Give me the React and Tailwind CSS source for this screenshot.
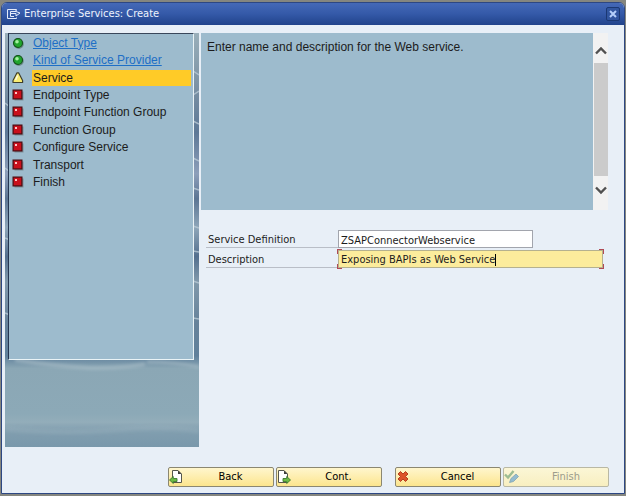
import React, { useState } from "react";

const steps = [
  { label: "Object Type", status: "done" },
  { label: "Kind of Service Provider", status: "done" },
  { label: "Service", status: "current" },
  { label: "Endpoint Type", status: "open" },
  { label: "Endpoint Function Group", status: "open" },
  { label: "Function Group", status: "open" },
  { label: "Configure Service", status: "open" },
  { label: "Transport", status: "open" },
  { label: "Finish", status: "open" },
];

const StatusIcon = ({ status }) => {
  if (status === "done") {
    return (
      <svg width="12" height="12" viewBox="0 0 12 12" aria-hidden="true">
        <circle cx="6.8" cy="7" r="5" fill="#6f8d8c" />
        <circle cx="6" cy="6" r="4.5" fill="#21a52d" stroke="#14501b" strokeWidth="1.1" />
        <circle cx="5" cy="4.8" r="1.8" fill="#a5f0a0" />
      </svg>
    );
  }
  if (status === "current") {
    return (
      <svg width="12" height="12" viewBox="0 0 12 12" aria-hidden="true">
        <path d="M5 0.8 H6.6 L10.6 8.5 V10.5 H1 V8.5 Z" fill="#f8ec72" stroke="#3f3f2c" strokeWidth="1.2" strokeLinejoin="round" />
        <path d="M5.6 3.5 L3.6 8" stroke="#fffde0" strokeWidth="1.5" />
      </svg>
    );
  }
  return (
    <svg width="12" height="12" viewBox="0 0 12 12" aria-hidden="true">
      <rect x="2.5" y="2.5" width="9" height="9" fill="#7b8f99" />
      <rect x="1.1" y="1.1" width="8.8" height="8.8" fill="#c9101c" stroke="#4c0a10" strokeWidth="1.2" />
      <rect x="3" y="3" width="2" height="2" fill="#ffc4c4" />
    </svg>
  );
};

const SidebarTexture = () => (
  <svg className="absolute inset-0 h-full w-full" viewBox="0 0 194 414" preserveAspectRatio="none" aria-hidden="true">
    <defs>
      <linearGradient id="water" x1="0" y1="0" x2="0" y2="1">
        <stop offset="0" stopColor="#9aafba" />
        <stop offset="0.12" stopColor="#7d94a6" />
        <stop offset="0.24" stopColor="#5d7896" />
        <stop offset="0.34" stopColor="#8d9fba" />
        <stop offset="0.4" stopColor="#5b7593" />
        <stop offset="0.47" stopColor="#8ea6b9" />
        <stop offset="0.54" stopColor="#536f8e" />
        <stop offset="0.6" stopColor="#8199ab" />
        <stop offset="0.7" stopColor="#66829a" />
        <stop offset="0.78" stopColor="#60809b" />
        <stop offset="0.81" stopColor="#8ba7b5" />
        <stop offset="0.92" stopColor="#8ca9b7" />
        <stop offset="0.94" stopColor="#93adba" />
        <stop offset="0.96" stopColor="#819eaf" />
        <stop offset="1" stopColor="#7998ab" />
      </linearGradient>
      <filter id="soft" x="-5%" y="-100%" width="110%" height="300%">
        <feGaussianBlur stdDeviation="1.5" />
      </filter>
    </defs>
    <rect width="194" height="414" fill="url(#water)" />
    <g fill="none" stroke="#b9cad5" strokeWidth="1.5" opacity="0.8">
      <path d="M188 38 L194 42 M188 62 L194 58 M188 88 L194 91 M188 125 L194 128 M188 155 L194 157 M188 193 L194 195 M188 218 L194 219 M188 248 L194 250 M188 285 L194 286" />
      <path d="M0 70 L5 74 M0 135 L5 139 M0 205 L5 207 M0 280 L5 282" />
    </g>
    <g fill="none" stroke="#a9bdc7" opacity="0.6" filter="url(#soft)">
      <path d="M10 327 Q50 333 85 335 Q120 335 140 331" strokeWidth="4" />
      <path d="M142 329 Q170 329 194 334" strokeWidth="3" />
      <path d="M0 396 Q60 401 110 397 T194 398" strokeWidth="5" opacity="0.4" />
    </g>
  </svg>
);

const PageArrowIcon = ({ back }) => (
  <svg width="15" height="16" viewBox="0 0 15 16" aria-hidden="true">
    <path
      d={back ? "M3.5 1.5 H9 L12.5 5 V13.5 H3.5 Z" : "M1.5 1.5 H7 L10.5 5 V13.5 H1.5 Z"}
      fill="#fff"
      stroke="#55564c"
    />
    <path d={back ? "M9 1.5 V5 H12.5 Z" : "M7 1.5 V5 H10.5 Z"} fill="#3d3d38" />
    <path
      d={
        back
          ? "M0.5 11 L4.3 7.5 V9.5 H8 V12.5 H4.3 V14.5 Z"
          : "M13.5 11 L9.7 7.5 V9.5 H6 V12.5 H9.7 V14.5 Z"
      }
      fill="#6cbb45"
      stroke="#3c7b2c"
      strokeWidth="0.9"
    />
  </svg>
);

const CancelIcon = () => (
  <svg width="15" height="16" viewBox="0 0 15 16" aria-hidden="true">
    <path
      d="M2 5 L4.5 2.5 L7 5 L9.5 2.5 L12 5 L9.5 7.5 L12 10 L9.5 12.5 L7 10 L4.5 12.5 L2 10 L4.5 7.5 Z"
      fill="#dc5228"
      stroke="#b33f1e"
      strokeLinejoin="round"
    />
  </svg>
);

const FinishIcon = () => (
  <svg width="16" height="16" viewBox="0 0 16 16" aria-hidden="true">
    <path d="M1 5.5 L4 8.5 L9.5 2" fill="none" stroke="#9dbd92" strokeWidth="2.4" />
    <path d="M5.5 13.5 L7 9.5 L12 5 L14.5 7.5 L9.5 12.5 Z" fill="#93bcd0" stroke="#82a4b2" strokeWidth="0.8" />
  </svg>
);

const WizardButton = ({ icon, label, disabled }) => (
  <button
    type="button"
    disabled={disabled}
    className="flex h-5 w-[106px] items-center rounded-xs border border-[#8b8771] bg-linear-to-b from-[#fff6cd] to-[#fce58d] text-black disabled:border-[#b9b8a4] disabled:from-[#fbf6d6] disabled:to-[#f8efc0] disabled:text-[#9c9b8b]"
  >
    {icon}
    <span className="flex-1 pl-1 text-center">{label}</span>
  </button>
);

const App = () => {
  const [name, setName] = useState("ZSAPConnectorWebservice");
  const [description, setDescription] = useState("Exposing BAPIs as Web Service");

  return (
    <div className="bg-[#85867f] px-px pt-0.5 pb-0.5 font-['DejaVu_Sans_Condensed','DejaVu_Sans',sans-serif] text-[11px] leading-4 text-[#1c1c1c]">
      <div className="overflow-hidden rounded-t-md border border-[#2d4783] bg-[#e8eff7]">
        <header className="flex h-[22px] items-center gap-0.5 bg-linear-to-b from-[#4569b7] via-[#3459a8] to-[#21438b] px-1 text-[#eef3fc]">
          <svg width="16" height="12" viewBox="0 0 16 12" fill="none" stroke="#e3eafa" aria-hidden="true">
            <path d="M10.5 2.5 V1.5 H1.5 V10.5 H10.5 V9.5" />
            <path d="M10 3.5 H4.5 V8.5 H8 M4.5 5.5 H8.5 M10 2 V3.5 L14 5 L10 8 V5.5 H8" />
          </svg>
          <h1 className="flex-1">Enterprise Services: Create</h1>
          <button
            type="button"
            aria-label="Close"
            className="flex h-3.5 w-3.5 items-center justify-center rounded-xs border border-[#1b3873] bg-[#31559f]"
          >
            <svg width="8" height="8" viewBox="0 0 8 8" stroke="#b5cffa" strokeWidth="2" aria-hidden="true">
              <path d="M1 1 L7 7 M7 1 L1 7" />
            </svg>
          </button>
        </header>

        <div className="flex gap-0.5 pt-2 pr-4 pl-[3px]">
          <aside className="relative h-[414px] w-[194px] shrink-0 pr-[5px] pl-[3px]">
            <SidebarTexture />
            <nav
              aria-label="Wizard steps"
              className="relative h-[327px] border border-t-[#39475b] border-r-[#eaf3f6] border-b-[#eaf3f6] border-l-[#263651] bg-[#9dbbcd] font-['Liberation_Sans',Arial,sans-serif] text-xs"
            >
              <ol className="grid h-[157px] auto-rows-fr pr-0.5">
                {steps.map(({ label, status }) => (
                  <li key={label} className="flex items-center gap-2 pl-[3px]">
                    <StatusIcon status={status} />
                    {status === "done" ? (
                      <a href="#" className="px-px text-[#1e6fc6] underline">
                        {label}
                      </a>
                    ) : (
                      <span className={status === "current" ? "flex-1 bg-[#ffcb27] px-px" : "px-px"}>
                        {label}
                      </span>
                    )}
                  </li>
                ))}
              </ol>
            </nav>
          </aside>

          <main className="min-w-0 flex-1">
            <section className="flex h-[177px]">
              <p className="flex-1 bg-[#9dbbcd] px-1.5 py-1.5 font-['Liberation_Sans',Arial,sans-serif] text-xs">
                Enter name and description for the Web service.
              </p>
              <div className="flex w-[15px] flex-col items-center bg-[#f2f2f2] pl-px">
                <button type="button" aria-label="Scroll up" className="flex h-[30px] w-full items-end justify-center pb-2">
                  <svg width="12" height="9" viewBox="0 0 12 9" fill="none" stroke="#505050" strokeWidth="2.4" aria-hidden="true">
                    <path d="M1 7.5 L6 2.5 L11 7.5" />
                  </svg>
                </button>
                <div className="w-full flex-1 bg-[#cbcbcb]" />
                <button type="button" aria-label="Scroll down" className="flex h-[34px] w-full items-start justify-center pt-2.5">
                  <svg width="12" height="9" viewBox="0 0 12 9" fill="none" stroke="#505050" strokeWidth="2.4" aria-hidden="true">
                    <path d="M1 1.5 L6 6.5 L11 1.5" />
                  </svg>
                </button>
              </div>
            </section>

            <form className="grid gap-0.5 pt-5 pr-[5px] pl-[5px]">
              <div className="flex">
                <label htmlFor="service" className="h-[18px] w-[132px] border-b border-[#b9bec7] pl-0.5 leading-5">
                  Service Definition
                </label>
                <input
                  id="service"
                  value={name}
                  onChange={(e) => setName(e.target.value)}
                  className="h-[18px] w-[195px] border border-[#a2a5ad] bg-white px-0.5 pt-0.5 outline-none"
                />
              </div>
              <div className="flex">
                <label htmlFor="description" className="h-[18px] w-[132px] border-b border-[#b9bec7] pl-0.5 leading-5">
                  Description
                </label>
                <div className="relative flex h-[18px] flex-1 items-center border border-[#b5b18f] bg-[#fcec9c] pt-0.5">
                  <input
                    id="description"
                    value={description}
                    onChange={(e) => setDescription(e.target.value)}
                    className="field-sizing-content min-w-0 border-r border-black pl-0.5 leading-3 outline-none"
                  />
                  {/* focus corners */}
                  <i className="absolute -top-0.5 -left-0.5 h-[5px] w-[5px] border-t border-l border-[#b04a55]" />
                  <i className="absolute -top-0.5 -right-0.5 h-[5px] w-[5px] border-t border-r border-[#b04a55]" />
                  <i className="absolute -bottom-0.5 -left-0.5 h-[5px] w-[5px] border-b border-l border-[#b04a55]" />
                  <i className="absolute -right-0.5 -bottom-0.5 h-[5px] w-[5px] border-r border-b border-[#b04a55]" />
                </div>
              </div>
            </form>
          </main>
        </div>

        <footer className="flex justify-end gap-0.5 pt-5 pr-[15px] pb-1.5">
          <WizardButton icon={<PageArrowIcon back />} label="Back" />
          <WizardButton icon={<PageArrowIcon />} label="Cont." />
          <div className="ml-[11px] flex gap-0.5">
            <WizardButton icon={<CancelIcon />} label="Cancel" />
            <WizardButton icon={<FinishIcon />} label="Finish" disabled />
          </div>
        </footer>
      </div>
    </div>
  );
};

export default App;
